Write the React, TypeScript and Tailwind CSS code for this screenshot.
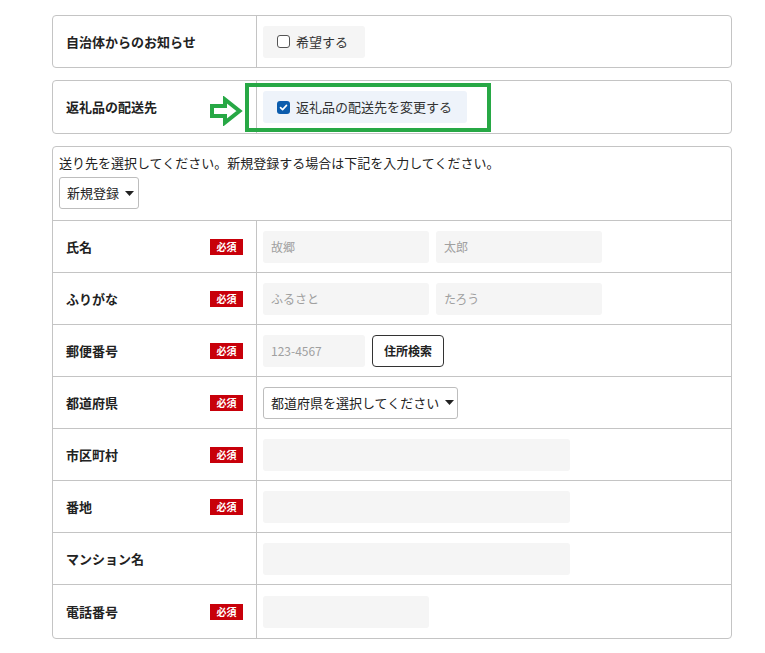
import React from "react";

const font = { fontFamily: '"Noto Sans CJK JP", "Noto Sans", sans-serif' };

function Badge() {
  return (
    <span className="inline-flex h-[16px] w-[33px] items-center justify-center bg-[#c8000a] text-[10px] font-bold leading-none text-white">
      必須
    </span>
  );
}

function Input({ w, ph }: { w: string; ph?: string }) {
  return (
    <div className={`flex h-[32px] items-center rounded-[3px] bg-[#f5f5f5] px-[8px] text-[12px] text-[#a0a0a0] ${w}`}>
      {ph}
    </div>
  );
}

function Caret() {
  return (
    <svg width="9" height="5" viewBox="0 0 9 5" className="ml-[6px]">
      <path d="M0 0 L9 0 L4.5 5 Z" fill="#222" />
    </svg>
  );
}

function Row({ label, req, children, last }: { label: string; req?: boolean; children?: React.ReactNode; last?: boolean }) {
  return (
    <div className={`flex ${last ? "h-[53px]" : "h-[52px] border-b border-[#c4c4c4]"}`}>
      <div className="flex w-[204px] shrink-0 items-center justify-between border-r border-[#c4c4c4] pl-[13px] pr-[13px]">
        <span className="text-[13px] font-bold text-[#222]">{label}</span>
        {req && <Badge />}
      </div>
      <div className="flex flex-1 items-center gap-[7px] pl-[6px]">{children}</div>
    </div>
  );
}

export default function App() {
  return (
    <div className="min-h-[653px] w-[765px] bg-white pl-[52px] pt-[15px] text-[#222]" style={font}>
      <div className="w-[680px]">
        {/* box 1 */}
        <div className="flex h-[53px] rounded-[4px] border border-[#c4c4c4]">
          <div className="flex w-[204px] shrink-0 items-center border-r border-[#c4c4c4] pl-[13px]">
            <span className="text-[13px] font-bold">自治体からのお知らせ</span>
          </div>
          <div className="flex flex-1 items-center pl-[6px]">
            <div className="flex h-[32px] w-[102px] items-center rounded-[3px] bg-[#f5f5f5] pl-[14px] text-[13px] text-[#333]">
              <span className="mr-[6px] inline-block h-[13px] w-[13px] rounded-[3px] border border-[#555] bg-white" />
              希望する
            </div>
          </div>
        </div>

        {/* box 2 */}
        <div className="relative mt-[12px] flex h-[54px] rounded-[4px] border border-[#c4c4c4]">
          <div className="flex w-[204px] shrink-0 items-center border-r border-[#c4c4c4] pl-[13px]">
            <span className="text-[13px] font-bold">返礼品の配送先</span>
          </div>
          <div className="flex flex-1 items-center pl-[6px]">
            <div className="flex h-[32px] w-[204px] items-center rounded-[3px] bg-[#eef3fa] pl-[14px] text-[13px] text-[#333]">
              <span className="mr-[6px] inline-flex h-[13px] w-[13px] items-center justify-center rounded-[3px] bg-[#0b5cad]">
                <svg width="9" height="9" viewBox="0 0 9 9">
                  <path d="M1.5 4.6 L3.6 6.6 L7.5 2.4" stroke="#fff" strokeWidth="1.6" fill="none" strokeLinecap="round" strokeLinejoin="round" />
                </svg>
              </span>
              返礼品の配送先を変更する
            </div>
          </div>
          {/* annotation */}
          <svg className="absolute left-[156px] top-[15px]" width="34" height="30" viewBox="0 0 34 30">
            <path d="M3 10 L16 10 L16 3.5 L30.5 15 L16 26.5 L16 20 L3 20 Z" fill="#fff" stroke="#27a845" strokeWidth="4" strokeLinejoin="miter" />
          </svg>
          <div className="absolute left-[192px] top-[2px] h-[49px] w-[246px] border-[4px] border-[#27a845]" />
        </div>

        {/* box 3 */}
        <div className="mt-[12px] rounded-[4px] border border-[#c4c4c4]">
          <div className="border-b border-[#c4c4c4] px-[6px] pb-[11px] pt-[7px]">
            <div className="text-[13px] leading-[18px] text-[#222]">送り先を選択してください。新規登録する場合は下記を入力してください。</div>
            <div className="mt-[5px] flex h-[32px] w-[80px] items-center rounded-[3px] border border-[#bdbdbd] pl-[7px] text-[13px]">
              新規登録
              <Caret />
            </div>
          </div>
          <Row label="氏名" req>
            <Input w="w-[166px]" ph="故郷" />
            <Input w="w-[166px]" ph="太郎" />
          </Row>
          <Row label="ふりがな" req>
            <Input w="w-[166px]" ph="ふるさと" />
            <Input w="w-[166px]" ph="たろう" />
          </Row>
          <Row label="郵便番号" req>
            <Input w="w-[102px]" ph="123-4567" />
            <div className="flex h-[32px] w-[72px] items-center justify-center rounded-[4px] border border-[#333] text-[12px] font-bold text-[#222]">
              住所検索
            </div>
          </Row>
          <Row label="都道府県" req>
            <div className="flex h-[32px] w-[195px] items-center rounded-[3px] border border-[#bdbdbd] pl-[7px] text-[13px]">
              都道府県を選択してください
              <Caret />
            </div>
          </Row>
          <Row label="市区町村" req>
            <Input w="w-[307px]" />
          </Row>
          <Row label="番地" req>
            <Input w="w-[307px]" />
          </Row>
          <Row label="マンション名">
            <Input w="w-[307px]" />
          </Row>
          <Row label="電話番号" req last>
            <Input w="w-[166px]" />
          </Row>
        </div>
      </div>
    </div>
  );
}
